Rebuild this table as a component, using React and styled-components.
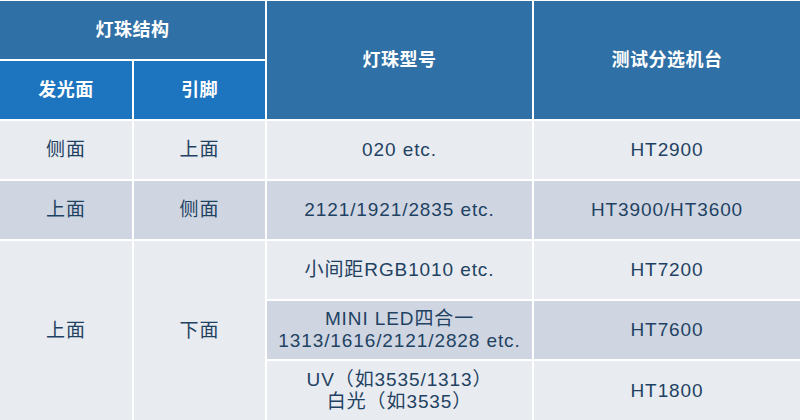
import React from 'react';
import styled, { createGlobalStyle } from 'styled-components';

const GlobalStyle = createGlobalStyle`
  html, body {
    margin: 0;
    padding: 0;
    background: #ffffff;
  }
  body {
    font-family: "Liberation Sans", "Noto Sans CJK SC", sans-serif;
  }
`;

const tones = {
  head: { bg: '#2f71a6', color: '#ffffff' },
  sub: { bg: '#1d74bf', color: '#ffffff' },
  light: { bg: '#e8ebf0', color: '#1f4262' },
  alt: { bg: '#cfd6e2', color: '#1f4262' },
};

const Table = styled.div`
  width: 800px;
  height: 420px;
  box-sizing: border-box;
  padding-top: 1px;
  background: #ffffff;
  display: grid;
  grid-template-columns: 132px 131px 265px 1fr;
  grid-template-rows: repeat(6, 58px) 59px;
  gap: 2px;
`;

const Cell = styled.div`
  grid-column: ${(p) => p.$col};
  grid-row: ${(p) => p.$row};
  background: ${(p) => tones[p.$tone].bg};
  color: ${(p) => tones[p.$tone].color};
  display: flex;
  flex-direction: column;
  align-items: center;
  justify-content: center;
  text-align: center;
  font-size: ${(p) => (p.$head ? '18px' : '19px')};
  font-weight: ${(p) => (p.$head ? 700 : 400)};
  letter-spacing: ${(p) => (p.$head ? '0.5px' : '0.9px')};
  line-height: 22px;
  white-space: nowrap;
`;

const cells = [
  { col: '1 / 3', row: '1', tone: 'head', head: true, text: ['灯珠结构'] },
  { col: '3', row: '1 / 3', tone: 'head', head: true, text: ['灯珠型号'] },
  { col: '4', row: '1 / 3', tone: 'head', head: true, text: ['测试分选机台'] },
  { col: '1', row: '2', tone: 'sub', head: true, text: ['发光面'] },
  { col: '2', row: '2', tone: 'sub', head: true, text: ['引脚'] },

  { col: '1', row: '3', tone: 'light', text: ['侧面'] },
  { col: '2', row: '3', tone: 'light', text: ['上面'] },
  { col: '3', row: '3', tone: 'light', text: ['020 etc.'] },
  { col: '4', row: '3', tone: 'light', text: ['HT2900'] },

  { col: '1', row: '4', tone: 'alt', text: ['上面'] },
  { col: '2', row: '4', tone: 'alt', text: ['侧面'] },
  { col: '3', row: '4', tone: 'alt', text: ['2121/1921/2835 etc.'] },
  { col: '4', row: '4', tone: 'alt', text: ['HT3900/HT3600'] },

  { col: '1', row: '5 / 8', tone: 'light', text: ['上面'] },
  { col: '2', row: '5 / 8', tone: 'light', text: ['下面'] },
  { col: '3', row: '5', tone: 'light', text: ['小间距RGB1010 etc.'] },
  { col: '4', row: '5', tone: 'light', text: ['HT7200'] },
  { col: '3', row: '6', tone: 'alt', text: ['MINI LED四合一', '1313/1616/2121/2828 etc.'] },
  { col: '4', row: '6', tone: 'alt', text: ['HT7600'] },
  { col: '3', row: '7', tone: 'light', text: ['UV（如3535/1313）', '白光（如3535）'] },
  { col: '4', row: '7', tone: 'light', text: ['HT1800'] },
];

export default function App() {
  return (
    <>
      <GlobalStyle />
      <Table>
        {cells.map((c, i) => (
          <Cell key={i} $col={c.col} $row={c.row} $tone={c.tone} $head={c.head}>
            {c.text.map((line, j) => (
              <span key={j}>{line}</span>
            ))}
          </Cell>
        ))}
      </Table>
    </>
  );
}
